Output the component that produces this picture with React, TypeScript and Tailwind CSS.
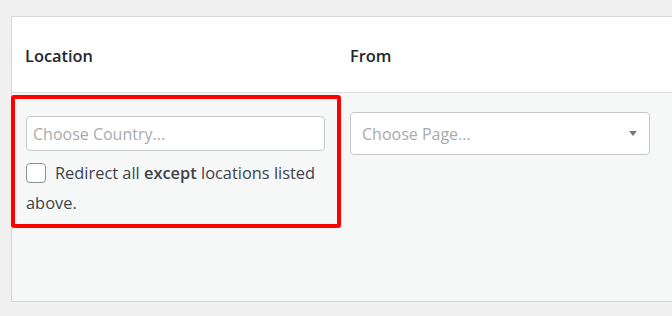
//@Third-Party
import React from "react";
//------------------------------------------------------

export default function App() {
  return (
    <div className="w-[672px] h-[316px] overflow-hidden bg-[#f0f0f0] pl-[11px] pt-[16px] font-['Open_Sans',sans-serif]">
      {/* table panel */}
      <div className="relative flex flex-col w-[720px] h-[286px] border border-r-0 border-[#d6d6d6] bg-[#f6f7f7]">
        {/* header row */}
        <div className="flex items-center h-[76px] shrink-0 pt-[3px] bg-white border-b border-[#dcdcdc] text-[16.4px] font-semibold text-[#23282d]">
          <div className="w-[325px] pl-[13px]">Location</div>
          <div className="pl-[13px]">From</div>
        </div>

        {/* body row */}
        <div className="flex grow">
          <div className="w-[325px] pl-[14px] pt-[23px]">
            <input
              className="block w-[299px] h-[35px] rounded-[4px] border border-[#c8c8c8] bg-white pl-[6px] text-[16px] text-[#3c434a] placeholder:text-[#a7aaad] outline-none"
              placeholder="Choose Country..."
            />
            <div className="mt-[7px] leading-[30px] text-[16.4px] text-[#3c434a] pr-[4px]">
              <span className="inline-block align-middle w-[20px] h-[20px] mr-[9px] -mt-[3px] rounded-[4px] border border-[#8c8f94] bg-white" />
              <span>Redirect all </span>
              <span className="font-semibold">except</span>
              <span> locations listed above.</span>
            </div>
          </div>

          <div className="pl-[13px] pt-[19px]">
            <div className="flex items-center justify-between w-[300px] h-[43px] rounded-[4px] border border-[#c8c8c8] bg-white pl-[11px] pr-[12px] text-[16px] text-[#a7aaad]">
              <span>Choose Page...</span>
              <span className="w-0 h-0 border-l-[4px] border-r-[4px] border-t-[5px] border-l-transparent border-r-transparent border-t-[#777]" />
            </div>
          </div>
        </div>

        {/* highlight annotation */}
        <div className="absolute left-[-1px] top-[78px] w-[330px] h-[133px] border-4 border-[#ff0000] rounded-[3px] pointer-events-none" />
      </div>
    </div>
  );
}
